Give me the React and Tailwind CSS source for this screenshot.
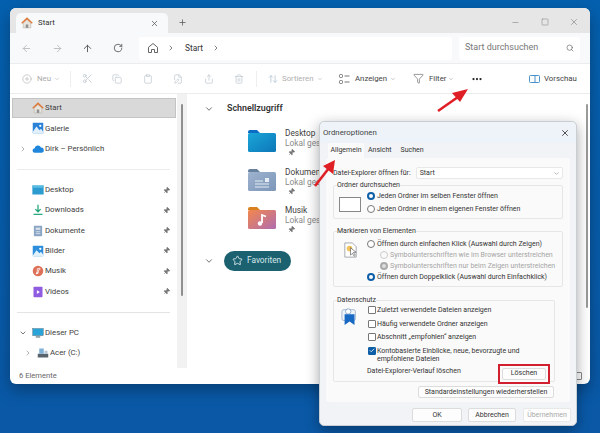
import React from 'react';
import {
  ArrowLeft, ArrowRight, ArrowUp, RotateCw, ChevronRight, ChevronDown, Search, X, Plus, Minus, Square,
  CirclePlus, Scissors, Copy, Clipboard, FileEdit, Share, Trash2, ArrowUpDown, Filter, MoreHorizontal,
  Pin, Star, Check,
} from 'lucide-react';

const FONT = { fontFamily: 'Roboto, "Noto Sans", sans-serif' };

const HomeColor = ({ size = 12 }) => (
  <svg width={size} height={size} viewBox="0 0 16 16">
    <path d="M3 8v6.5h10V8L8 3.5z" fill="#e9e4dc" stroke="#a8a39b" strokeWidth=".6" />
    <path d="M1 8.3 8 1.8l7 6.5" fill="none" stroke="#dd7a3c" strokeWidth="2" />
    <rect x="6.3" y="10" width="3.4" height="4.5" fill="#8d8f92" />
  </svg>
);

const HomeOutline = () => (
  <svg width="12" height="12" viewBox="0 0 16 16" fill="none" stroke="#555" strokeWidth="1.2">
    <path d="M2 7 8 2l6 5v7h-4v-4H6v4H2z" strokeLinejoin="round" />
  </svg>
);

const NavIcon = ({ type }) => {
  const common = { width: 12, height: 12, viewBox: '0 0 16 16' };
  if (type === 'galerie') return <svg {...common}><rect x="1" y="1" width="14" height="14" fill="#2b82d6" /><path d="M1 13 6 6l4 5 2-2 3 4v2H1z" fill="#dff0fb" /><circle cx="11" cy="5" r="1.5" fill="#fff" /></svg>;
  if (type === 'cloud') return <svg {...common}><path d="M4 13a3 3 0 0 1-.5-6A4.5 4.5 0 0 1 12 6a3.5 3.5 0 0 1 .5 7z" fill="#1f86dc" /></svg>;
  if (type === 'desktop') return <svg {...common}><rect x="0.5" y="2" width="15" height="12" fill="#2b9bd0" /><rect x="0.5" y="2" width="15" height="3" fill="#5bbde4" /></svg>;
  if (type === 'downloads') return <svg {...common}><path d="M8 1v9M4.5 6.8 8 10.3l3.5-3.5" fill="none" stroke="#21a67a" strokeWidth="1.7" /><rect x="2" y="13" width="12" height="1.6" fill="#21a67a" /></svg>;
  if (type === 'dokumente') return <svg {...common}><rect x="2.5" y="1" width="11" height="14" rx="1" fill="#8ba5c4" /><path d="M5 9h6M5 11.5h6" stroke="#e6edf5" /><rect x="5" y="3.5" width="6" height="3" fill="#d6e1ec" /></svg>;
  if (type === 'bilder') return <svg {...common}><rect x="1" y="1" width="14" height="14" rx="1" fill="#2d8fdc" /><path d="M1 14 6 7l4 4 2-2 3 4v2H1z" fill="#e1f1fb" /><circle cx="11" cy="5" r="1.5" fill="#fff" /></svg>;
  if (type === 'musik') return <svg {...common}><circle cx="8" cy="8" r="7" fill="#de7058" /><path d="M7 11V5l3.5-.8v2L8.4 6.7V11" fill="none" stroke="#fff" /><circle cx="6.5" cy="11" r="1.3" fill="#fff" /></svg>;
  if (type === 'videos') return <svg {...common}><rect x="2" y="1" width="12" height="14" rx="1" fill="#8f5be0" /><path d="M6.5 5.5v5l4-2.5z" fill="#fff" /></svg>;
  if (type === 'pc') return <svg {...common}><rect x="1" y="2" width="14" height="9.5" fill="#2aa3d8" stroke="#55707d" strokeWidth=".6" /><rect x="5" y="12.5" width="6" height="1.5" fill="#55707d" /></svg>;
  return <svg {...common}><rect x="1" y="9" width="14" height="5" fill="#59636b" /><rect x="3" y="2" width="6" height="7" fill="#7fb0d8" /><rect x="10" y="5" width="4" height="4" fill="#b5c7d6" /></svg>;
};

const NavRow = ({ icon, label, pinned, expander, indent, selected }) => (
  <div className={`flex items-center h-[20.3px] pr-1 ml-[2px] mr-[1px] ${selected ? 'bg-[#d9d9d9] border border-[#c4c4c4]' : ''}`}>
    <span className={`${selected ? 'w-[19px]' : 'w-[20px]'} flex justify-center pl-[2px] ${indent ? 'ml-[5px]' : ''}`}>
      {expander === 'right' && <ChevronRight size={8} color="#888" />}
      {expander === 'down' && <ChevronDown size={8} color="#333" />}
    </span>
    <span className="flex w-[12px] justify-center">
      {icon === 'home' ? <HomeColor /> : <NavIcon type={icon} />}
    </span>
    <span className="ml-[1px] flex-1 text-[7.8px] text-[#404040] whitespace-nowrap">{label}</span>
    {pinned && <Pin size={7} color="#777" fill="#777" className="rotate-45 mr-[2px]" />}
  </div>
);

const Folder = ({ tab, from, to, children }) => (
  <svg width="28" height="22" viewBox="0 0 28 22">
    <path d="M0 2a2 2 0 0 1 2-2h7l3 3h-12z" fill={tab} />
    <rect y="3" width="28" height="19" rx="1.5" fill={`url(#${from.slice(1)})`} />
    <defs>
      <linearGradient id={from.slice(1)} x1="0" y1="0" x2="1" y2="1">
        <stop offset="0" stopColor={from} />
        <stop offset="1" stopColor={to} />
      </linearGradient>
    </defs>
    {children}
  </svg>
);

const QuickItem = ({ name, folder }) => (
  <div className="flex items-start gap-[9px] h-[38.5px] pl-[248px]">
    <div className="pt-[1px]">{folder}</div>
    <div className="w-[34px] overflow-hidden leading-[10px] text-[8.3px] -mt-[1px] whitespace-nowrap">
      <div className="text-[#404040]">{name}</div>
      <div className="text-[#8a8a8a]">Lokal ges</div>
      <Pin size={7} color="#777" fill="#777" className="rotate-45 mt-[1px] ml-[3px]" />
    </div>
  </div>
);

const Radio = ({ on, muted }) => (
  <span className={`inline-flex w-[8px] h-[8px] shrink-0 rounded-full items-center justify-center border ${on ? (muted ? 'border-[#aaa] border-[2px] bg-[#ddd]' : 'border-[#0f5fa8] border-[2.5px] bg-white') : muted ? 'border-[#ccc]' : 'border-[#777] bg-white'}`} />
);

const RadioRow = ({ on, muted, children, className = '' }) => (
  <div className={`flex items-center gap-[2px] h-[11px] text-[7px] ${muted ? 'text-[#a5a5a5]' : 'text-[#333]'} ${className}`}>
    <Radio on={on} muted={muted} />
    <span className="whitespace-nowrap">{children}</span>
  </div>
);

const CheckRow = ({ on, children, className = '' }) => (
  <div className={`flex items-start gap-[1px] text-[7px] leading-[8.5px] text-[#333] ${className}`}>
    <span className={`w-[8px] h-[8px] shrink-0 rounded-[1px] border flex items-center justify-center ${on ? 'bg-[#0f5fa8] border-[#0f5fa8]' : 'border-[#777] bg-white'}`}>
      {on && <Check size={7} color="#fff" strokeWidth={3} />}
    </span>
    <span>{children}</span>
  </div>
);

const Group = ({ title, className, children }) => (
  <fieldset className={`border border-[#e6e6e6] rounded-[2px] ${className}`}>
    <legend className="text-[7px] leading-[8px] text-[#333] ml-[3px]">{title}</legend>
    {children}
  </fieldset>
);

const DialogButton = ({ children, className = '' }) => (
  <button className={`block h-[12px] bg-[#fdfdfd] border border-[#dcdcdc] rounded-[2px] text-[7px] leading-none text-[#333] whitespace-nowrap ${className}`}>{children}</button>
);

const RedArrow = ({ className, viewBox, line, head }) => (
  <svg className={`absolute ${className}`} viewBox={viewBox}>
    <path d={line} stroke="#df1f26" strokeWidth="2.6" fill="none" />
    <path d={head} fill="#df1f26" />
  </svg>
);

const Dialog = () => (
  <div className="absolute left-[319px] top-[121px] w-[258px] h-[305px] bg-[#f1f3f6] rounded-[5px] border border-[#c9ced4] shadow-[0_4px_14px_rgba(0,0,0,0.35)] flex flex-col">
    <div className="h-[21px] flex items-center justify-between pl-[3px] pr-[6px] shrink-0 rounded-t-[5px] bg-[#edf3f9]">
      <span className="text-[7.8px] text-[#444]">Ordneroptionen</span>
      <X size={10} color="#333" />
    </div>
    <div className="flex h-[15px] pl-[8px] text-[7px] items-center text-[#333] shrink-0">
      <span className="bg-[#fafafa] h-[15px] w-[36px] flex items-center justify-center rounded-t-[2px]">Allgemein</span>
      <span className="ml-[4px]">Ansicht</span>
      <span className="ml-[9px]">Suchen</span>
    </div>
    <div className="mx-[6px] h-[244px] bg-[#fafafa] rounded-[3px] px-[7px] pt-[9px] shrink-0">
      <div className="flex items-center text-[7px] text-[#333] h-[12px]">
        <span className="w-[83px] whitespace-nowrap">Datei-Explorer öffnen für:</span>
        <span className="w-[148px] h-[12px] bg-white border border-[#e8e8e8] flex items-center justify-between pl-[3px] pr-[2px] rounded-[2px]">
          Start <ChevronDown size={7} color="#888" />
        </span>
      </div>
      <Group title="Ordner durchsuchen" className="w-[230px] h-[38px] mt-[2px]">
        <div className="flex items-start pl-[5px] pt-[1.5px]">
          <div className="w-[22px] h-[15px] border border-[#888] bg-white mt-[6px]" />
          <div className="ml-[6px] flex flex-col gap-[2px]">
            <RadioRow on>Jeden Ordner im selben Fenster öffnen</RadioRow>
            <RadioRow>Jeden Ordner in einem eigenen Fenster öffnen</RadioRow>
          </div>
        </div>
      </Group>
      <Group title="Markieren von Elementen" className="w-[230px] h-[60px] mt-[8px]">
        <div className="flex items-start pl-[9px] pt-[3.5px]">
          <svg width="15" height="17" viewBox="0 0 14 18" className="mt-[3px]">
            <path d="M1 1h8l4 4v11H1z" fill="#fff" stroke="#8b9199" strokeWidth=".8" />
            <circle cx="6" cy="7" r="3" fill="#f2c25c" />
            <path d="M7 6v8l2-2 2 3 1-1-2-3h3z" fill="#fff" stroke="#444" strokeWidth=".6" />
          </svg>
          <div className="ml-[9px] flex flex-col">
            <RadioRow>Öffnen durch einfachen Klick (Auswahl durch Zeigen)</RadioRow>
            <RadioRow muted className="ml-[13px]">Symbolunterschriften wie im Browser unterstreichen</RadioRow>
            <RadioRow muted on className="ml-[13px]">Symbolunterschriften nur beim Zeigen unterstreichen</RadioRow>
            <RadioRow on>Öffnen durch Doppelklick (Auswahl durch Einfachklick)</RadioRow>
          </div>
        </div>
      </Group>
      <Group title="Datenschutz" className="w-[222px] h-[86px] mt-[9px]">
        <div className="flex items-start pl-[6px] pt-[2px]">
          <svg width="20" height="18" viewBox="0 0 22 20" className="mt-[1px]">
            <rect x="2" y="3" width="15" height="12" rx="2" fill="#eef3f8" stroke="#8ba5c4" strokeWidth=".8" />
            <circle cx="9" cy="5" r="3" fill="#fff" stroke="#6a93c4" strokeWidth=".8" />
            <path d="M5 8h11v12l-5.500-4-5.500 4z" fill="#1769c4" />
          </svg>
          <div className="ml-[8px] flex flex-col gap-[5px]">
            <CheckRow>Zuletzt verwendete Dateien anzeigen</CheckRow>
            <CheckRow>Häufig verwendete Ordner anzeigen</CheckRow>
            <CheckRow>Abschnitt „empfohlen“ anzeigen</CheckRow>
            <CheckRow on className="w-[165px]">Kontobasierte Einblicke, neue, bevorzugte und empfohlene Dateien</CheckRow>
          </div>
        </div>
        <div className="flex items-start pl-[33px]">
          <span className="text-[7px] leading-[14px] text-[#333] whitespace-nowrap w-[131px]">Datei-Explorer-Verlauf löschen</span>
          <span className="border-[2px] border-[#d21f30] p-[2px] bg-[#fafafa]">
            <DialogButton className="w-[44px]">Löschen</DialogButton>
          </span>
        </div>
      </Group>
      <div className="flex justify-end mt-[4px] pr-[9px]">
        <DialogButton className="w-[136px]">Standardeinstellungen wiederherstellen</DialogButton>
      </div>
    </div>
    <div className="flex justify-end pr-[5px] pt-[6px]">
      <DialogButton className="w-[50px] h-[14px] border-[#6f9fc0]">OK</DialogButton>
      <DialogButton className="ml-[6px] w-[48px] h-[14px]">Abbrechen</DialogButton>
      <DialogButton className="ml-[7px] w-[48px] h-[14px] text-[#aaa] bg-[#f1f3f6] border-[#e8e8e8]">Übernehmen</DialogButton>
    </div>
  </div>
);

const App = () => (
  <div style={FONT} className="relative w-[600px] h-[433px] overflow-hidden bg-gradient-to-b from-[#0460ae] to-[#0a58a6] pt-[8px] pl-[10px]">
    <div className="w-[580px] h-[376px] bg-white rounded-[6px] overflow-hidden flex flex-col shadow-[0_6px_16px_rgba(0,0,0,0.3)]">
      {/* tab strip */}
      <div className="h-[25px] bg-[#e6e6e6] flex items-end pl-[6px] shrink-0">
        <div className="w-[152px] h-[20px] bg-[#f8f9fa] rounded-t-[5px] flex items-center pl-[5px] pr-[9px]">
          <HomeColor />
          <span className="ml-[5px] flex-1 text-[7.8px] text-[#333]">Start</span>
          <X size={9} color="#555" />
        </div>
        <Plus size={9} color="#555" className="ml-[10px] mb-[6px]" />
        <div className="ml-auto flex items-center pr-[11px] mb-[6px]">
          <Minus size={9} color="#999" />
          <Square size={8} color="#999" className="ml-[21px]" />
          <X size={10} color="#999" className="ml-[20px]" />
        </div>
      </div>
      {/* address bar */}
      <div className="h-[31px] bg-[#f8f9fa] border-b border-[#ececec] flex items-center pl-[11px] shrink-0">
        <ArrowLeft size={11} color="#bbb" />
        <ArrowRight size={11} color="#bbb" className="ml-[20px]" />
        <ArrowUp size={11} color="#555" className="ml-[19px]" />
        <RotateCw size={10} color="#555" className="ml-[20px]" />
        <div className="ml-[16px] w-[313px] h-[23px] bg-white rounded-[3px] flex items-center pl-[8px] text-[8.4px] text-[#333]">
          <HomeOutline />
          <ChevronRight size={8} color="#444" className="ml-[8px]" />
          <span className="ml-[10px] w-[18px]">Start</span>
          <ChevronRight size={8} color="#444" className="ml-[9px]" />
        </div>
        <div className="ml-[7px] w-[121px] h-[23px] bg-white rounded-[3px] flex items-center justify-between px-[6px] text-[9px] text-[#777]">
          Start durchsuchen <Search size={8} color="#666" />
        </div>
      </div>
      {/* command bar */}
      <div className="h-[30px] border-b border-[#ececec] flex items-center text-[7.8px] whitespace-nowrap shrink-0 pl-[12px]">
        <CirclePlus size={10} color="#c4c4c4" />
        <span className="ml-[5px] w-[14px] text-[#aaa]">Neu</span>
        <ChevronDown size={6} color="#aaa" className="ml-[3px]" />
        <span className="w-px h-[16px] bg-[#eee] ml-[10px]" />
        <Scissors size={11} color="#c6ced4" className="ml-[11px]" />
        <Copy size={10} color="#c6ced4" className="ml-[19px]" />
        <Clipboard size={10} color="#c6ced4" className="ml-[21px]" />
        <FileEdit size={10} color="#c6ced4" className="ml-[20px]" />
        <Share size={10} color="#c6ced4" className="ml-[21px]" />
        <Trash2 size={10} color="#c6ced4" className="ml-[20px]" />
        <span className="w-px h-[16px] bg-[#eee] ml-[12px]" />
        <ArrowUpDown size={10} color="#b8c8d4" className="ml-[11px]" />
        <span className="ml-[4px] w-[33px] text-[#b0b0b0]">Sortieren</span>
        <ChevronDown size={6} color="#aaa" className="ml-[2px]" />
        <svg width="11" height="10" viewBox="0 0 11 10" className="ml-[16px]" fill="none" stroke="#555" strokeWidth=".8">
          <rect x=".5" y=".5" width="3" height="3" rx="1" /><rect x=".5" y="6.500" width="3" height="3" rx="1" />
          <path d="M5.500 2h5M5.500 8h5" />
        </svg>
        <span className="ml-[5px] w-[32px] text-[#444]">Anzeigen</span>
        <ChevronDown size={6} color="#999" className="ml-[3px]" />
        <Filter size={11} color="#555" strokeWidth={1.3} className="ml-[17px]" />
        <span className="ml-[5px] w-[16px] text-[#444]">Filter</span>
        <ChevronDown size={6} color="#999" className="ml-[3px]" />
        <MoreHorizontal size={12} color="#222" strokeWidth={2.5} className="ml-[17px]" />
        <svg width="11" height="8" viewBox="0 0 11 8" className="ml-[46px]" fill="none" stroke="#3a86c4" strokeWidth=".9">
          <rect x=".5" y=".5" width="10" height="7" rx="1" /><path d="M6 .5v7" />
        </svg>
        <span className="ml-[4px] text-[#444]">Vorschau</span>
      </div>
      {/* body */}
      <div className="flex-1 flex min-h-0 relative">
        <div className="w-[167px] pt-[4px] shrink-0">
          <NavRow icon="home" label="Start" selected />
          <NavRow icon="galerie" label="Galerie" />
          <NavRow icon="cloud" label="Dirk – Persönlich" expander="right" />
          <div className="h-px bg-[#ececec] mx-[7px] my-[10px]" />
          <NavRow icon="desktop" label="Desktop" pinned />
          <NavRow icon="downloads" label="Downloads" pinned />
          <NavRow icon="dokumente" label="Dokumente" pinned />
          <NavRow icon="bilder" label="Bilder" pinned />
          <NavRow icon="musik" label="Musik" pinned />
          <NavRow icon="videos" label="Videos" pinned />
          <div className="h-px bg-[#e4e4e4] mx-[7px] my-[10px]" />
          <NavRow icon="pc" label="Dieser PC" expander="down" />
          <NavRow icon="drive" label="Acer (C:)" expander="right" indent />
        </div>
        <div className="w-[10px] h-[274px] bg-[#f2f2f2] flex justify-center pt-[10px] shrink-0">
          <div className="w-[2px] h-[192px] bg-[#8f8f8f] rounded-full" />
        </div>
        <div className="ml-auto w-[6px] pt-[10px] flex justify-center">
          <div className="w-[2px] h-[204px] bg-[#9a9a9a] rounded-full" />
        </div>
      </div>
      <div className="h-[16px] flex items-center justify-between pl-[9px] pr-[8px] text-[7.6px] text-[#666] shrink-0">
        6 Elemente
        <span className="w-[8px] h-[8px] border border-[#888] rounded-[1px]" />
      </div>
    </div>

    {/* main pane content sits over the window body */}
    <div className="absolute left-[0px] top-[100px] w-[319px] text-[#333]">
      <div className="flex items-center h-[18px] pl-[204px]">
        <ChevronDown size={10} color="#555" />
        <span className="ml-[13px] text-[8.9px] font-semibold text-[#333]">Schnellzugriff</span>
      </div>
      <div className="mt-[11px]">
        <QuickItem name="Desktop" folder={<Folder tab="#0c6cc4" from="#1aa6d8" to="#0d77b8" />} />
        <QuickItem name="Dokumen" folder={
          <Folder tab="#67809d" from="#9db3cf" to="#7d96b8">
            <path d="M7 12h8M7 15h14M7 18h14" stroke="#e6edf5" strokeWidth="1.2" />
            <rect x="17" y="9" width="4" height="4" fill="#e6edf5" />
          </Folder>
        } />
        <QuickItem name="Musik" folder={
          <Folder tab="#d9811f" from="#f3874d" to="#b06cb0">
            <path d="M14 16V8l4 1.500" fill="none" stroke="#fff" strokeWidth="1.800" />
            <circle cx="12" cy="16.500" r="2.200" fill="#fff" />
          </Folder>
        } />
      </div>
      <div className="flex items-center pl-[204px] mt-[6px]">
        <ChevronDown size={10} color="#555" />
        <div className="ml-[10px] w-[67px] h-[20px] rounded-full bg-[#1b6170] flex items-center pl-[8px] text-[8.3px] text-[#d8e8ea]">
          <Star size={11} color="#d8e8ea" />
          <span className="ml-[4px]">Favoriten</span>
        </div>
      </div>
    </div>

    <Dialog />

    <RedArrow className="left-[436px] top-[87px] w-[34px] h-[26px]" viewBox="0 0 34 26" line="M2 24 22 10" head="M32 2 24 15 16 6z" />
    <RedArrow className="left-[312px] top-[158px] w-[26px] h-[30px]" viewBox="0 0 26 30" line="M3 28 17 10" head="M23 2 21 16 11 8z" />
  </div>
);

export default App;
